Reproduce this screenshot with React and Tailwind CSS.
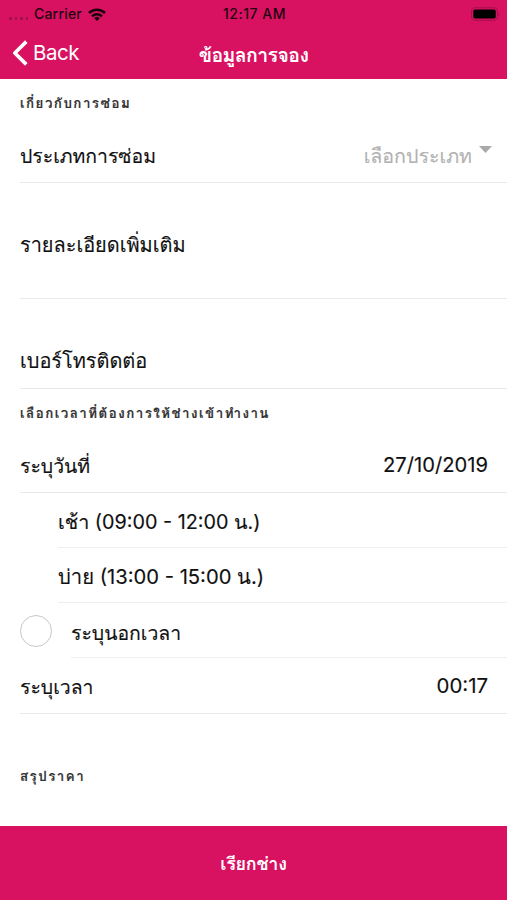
function StatusBar() {
  return (
    <div className="grid h-[26px] grid-cols-3 items-center pr-[7px] pb-[2px] pl-[9px] text-[14px] font-medium tracking-[0.2px] text-[#24040f]">
      <div className="flex items-center">
        <div className="mt-[9px] mr-[5px] flex gap-[3px]">
          <span className="size-[2.5px] rounded-full bg-[#96104a]" />
          <span className="size-[2.5px] rounded-full bg-[#96104a]" />
          <span className="size-[2.5px] rounded-full bg-[#96104a]" />
          <span className="size-[2.5px] rounded-full bg-[#96104a]" />
        </div>
        <span className="mr-[6px] ml-[1px]">Carrier</span>
        <svg width="18" height="13" viewBox="0 0 18 13" fill="none" stroke="#1b020a">
          <path d="M1 5a11.3 11.3 0 0 1 16 0" strokeWidth="2.6" />
          <path d="M4 8.3a7 7 0 0 1 10 0" strokeWidth="2.4" />
          <path d="M9 13 6.2 10.2a4 4 0 0 1 5.6 0z" fill="#1b020a" stroke="none" />
        </svg>
      </div>
      <span className="text-center tracking-[0.5px]">12:17 AM</span>
      <svg className="justify-self-end" width="30" height="14" viewBox="0 0 30 14">
        <rect x="1.5" y="0.7" width="26" height="12.6" rx="3.4" fill="none" stroke="#a60f4e" />
        <rect x="3.3" y="2.6" width="22.4" height="8.8" rx="1.6" fill="#000" />
        <path d="M28.6 5v4c1.4-.6 1.4-3.4 0-4z" fill="#a60f4e" />
      </svg>
    </div>
  );
}

function NavBar({ title }) {
  return (
    <div className="grid h-[53px] grid-cols-3 items-center text-white">
      <button className="flex items-center pl-[12px] text-left">
        <svg width="17" height="26" viewBox="0 0 17 26" fill="none" stroke="currentColor" strokeWidth="3.6" strokeLinejoin="round">
          <path d="M14.3 1.6 2.8 13l11.5 11.4" />
        </svg>
        <span className="ml-[4px] pt-[1px] text-[20.5px] leading-none tracking-[-0.5px]">Back</span>
      </button>
      <h1 className="pt-[4px] text-center text-[19.5px] font-bold tracking-[-0.6px] whitespace-nowrap">{title}</h1>
    </div>
  );
}

function SectionTitle({ children, className = "" }) {
  return (
    <h2 className={`pl-[20px] text-[13.3px] font-bold tracking-[1.5px] text-[#333] ${className}`}>
      {children}
    </h2>
  );
}

function Row({ label, className = "", children }) {
  return (
    <div className={`ml-[20px] flex justify-between border-b border-[#e9e9e9] pr-[19px] ${className}`}>
      <span>{label}</span>
      {children}
    </div>
  );
}

export default function App() {
  return (
    <div className="flex h-[900px] w-[507px] flex-col bg-white font-['Inter','Loma','Noto_Sans_Thai',sans-serif] text-[19.4px] leading-[28px] text-[#111]">
      <header className="h-[79px] shrink-0 bg-[#d81161]">
        <StatusBar />
        <NavBar title="ข้อมูลการจอง" />
      </header>

      <main className="flex-1 [-webkit-text-stroke:0.15px]">
        <SectionTitle className="h-[48px] pt-[10px]">เกี่ยวกับการซ่อม</SectionTitle>
        <Row label="ประเภทการซ่อม" className="h-[56px] pt-[15px]">
          <div className="flex text-[19.6px] text-[#b2b2b2]">
            <span>เลือกประเภท</span>
            <svg className="mt-[4px] -mr-[4px] ml-[7px]" width="13" height="7" viewBox="0 0 13 7">
              <path d="M0 0h13L6.5 7z" fill="#a9a9a9" />
            </svg>
          </div>
        </Row>
        <Row label="รายละเอียดเพิ่มเติม" className="h-[116px] pt-[48px] text-[19.9px]" />
        <Row label="เบอร์โทรติดต่อ" className="h-[90px] pt-[48px] text-[19.9px]" />

        <SectionTitle className="h-[48px] pt-[10px]">เลือกเวลาที่ต้องการให้ช่างเข้าทำงาน</SectionTitle>
        <Row label="ระบุวันที่" className="h-[56px] pt-[15px]">
          <span className="-mt-[1px] text-[20.2px]">27/10/2019</span>
        </Row>
        <div className="ml-[58px] h-[55px] border-b border-[#efefef] pt-[15px] text-[19.8px]">เช้า (09:00 - 12:00 น.)</div>
        <div className="ml-[58px] h-[55px] border-b border-[#efefef] pt-[15px] text-[20.2px]">บ่าย (13:00 - 15:00 น.)</div>
        <div className="flex h-[55px] pl-[20px]">
          <span className="mt-[12px] mr-[19px] size-[32px] shrink-0 rounded-full border border-[#c8c8c8]" />
          <div className="flex-1 border-b border-[#efefef] pt-[16px]">ระบุนอกเวลา</div>
        </div>
        <Row label="ระบุเวลา" className="h-[56px] pt-[15px]">
          <span className="-mt-[1px] text-[20.4px]">00:17</span>
        </Row>

        <SectionTitle className="pt-[48px]">สรุปราคา</SectionTitle>
      </main>

      <footer className="h-[74px] shrink-0 bg-[#d81161]">
        <button className="h-full w-full pt-[1px] text-[18px] font-bold tracking-[-0.3px] text-white">เรียกช่าง</button>
      </footer>
    </div>
  );
}
